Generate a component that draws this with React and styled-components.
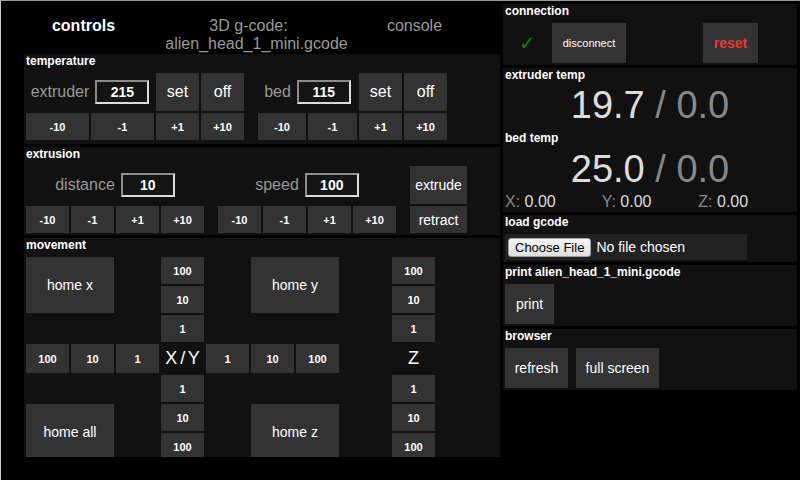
import React from 'react';
import styled, { createGlobalStyle } from 'styled-components';

const GlobalStyle = createGlobalStyle`
  html, body {
    margin: 0;
    padding: 0;
    background: #000;
  }
  body {
    width: 800px;
    height: 480px;
    box-sizing: border-box;
    border-top: 1px solid #9a9a9a;
    border-left: 1px solid #c8c8c8;
    font-family: "Liberation Sans", Arial, sans-serif;
    color: #fff;
    overflow: hidden;
  }
`;

const Page = styled.div`
  display: flex;
  align-items: flex-start;
  gap: 3px;
  padding-left: 23px;
`;

const LeftColumn = styled.div`
  width: 476px;
  display: flex;
  flex-direction: column;
`;

const RightColumn = styled.div`
  width: 294px;
  margin-top: 3px;
  display: flex;
  flex-direction: column;
  gap: 3px;
`;

const Stack = styled.div`
  display: flex;
  flex-direction: column;
  gap: 3px;
`;

const Tabs = styled.nav`
  display: flex;
  height: 53px;
  box-sizing: border-box;
  padding-top: 16px;
  font-size: 16px;
  line-height: 18px;
`;

const Tab = styled.div`
  width: ${p => p.$w}px;
  flex: none;
  text-align: center;
  color: ${p => (p.$active ? '#fff' : '#999')};
  font-weight: ${p => (p.$active ? 'bold' : 'normal')};
`;

const TabLine = styled.span`
  display: block;
  padding-right: ${p => p.$shift || 0}px;
`;

const Panel = styled.section`
  background: #111;
  padding: 0 2px ${p => (p.$pb !== undefined ? p.$pb : 2)}px;
  box-sizing: border-box;
  ${p => (p.$h ? `height: ${p.$h}px; overflow: hidden;` : '')}
`;

const PanelTitle = styled.div`
  font-size: 12px;
  font-weight: bold;
  line-height: 14px;
  margin-bottom: ${p => (p.$mb !== undefined ? p.$mb : 5)}px;
  color: #fff;
`;

const Btn = styled.button`
  grid-column: ${p => p.$col || 'auto'};
  grid-row: ${p => p.$row || 'auto'};
  width: ${p => (p.$w ? `${p.$w}px` : 'auto')};
  height: ${p => (p.$h ? `${p.$h}px` : 'auto')};
  margin: 0;
  padding: 0;
  border: none;
  background: #333;
  color: ${p => p.$color || '#fff'};
  font-family: inherit;
  font-size: ${p => (p.$small ? 11 : p.$size || 14)}px;
  font-weight: ${p => (p.$small || p.$bold ? 'bold' : 'normal')};
  display: flex;
  align-items: center;
  justify-content: center;
  cursor: pointer;
`;

const TempGrid = styled.div`
  display: grid;
  grid-template-columns: 63px 63px 43px 43px 10px 48px 49px 43px 43px;
  grid-template-rows: 38px 27px;
  gap: 2px;
`;

const ExtrusionGrid = styled.div`
  display: grid;
  grid-template-columns: 43px 43px 43px 43px 10px 43px 43px 43px 43px 10px 57px;
  grid-template-rows: 38px 27px;
  gap: 2px;
`;

const MoveGrid = styled.div`
  display: grid;
  grid-template-columns: repeat(7, 43px) 49px 43px;
  grid-template-rows: 27px 27px 27px 29px 27px 27px 27px;
  gap: 2px;
`;

const FieldCell = styled.div`
  grid-column: ${p => p.$col};
  grid-row: 1;
  display: flex;
  align-items: center;
  justify-content: center;
  gap: 6px;
  color: #999;
  font-size: 16px;
`;

const NumInput = styled.input`
  width: 54px;
  height: 24px;
  box-sizing: border-box;
  padding: 0;
  background: #151515;
  color: #fff;
  border: 2px solid;
  border-color: #8c8c8c #dcdcdc #dcdcdc #8c8c8c;
  text-align: center;
  font-family: inherit;
  font-size: 14px;
  font-weight: bold;
`;

const AxisLabel = styled.div`
  grid-column: ${p => p.$col};
  grid-row: ${p => p.$row};
  display: flex;
  align-items: center;
  justify-content: center;
  font-size: 18px;
  word-spacing: -2px;
  color: #fff;
`;

const ConnRow = styled.div`
  display: grid;
  grid-template-columns: 45px 74px 73px 55px;
  grid-template-rows: 40px;
  gap: 2px;
`;

const Check = styled.div`
  display: flex;
  align-items: center;
  justify-content: center;
  color: #0a800a;
  font-size: 20px;
  font-family: "DejaVu Sans", sans-serif;
`;

const BigTemp = styled.div`
  text-align: center;
  font-size: 38px;
  line-height: 43px;
  color: #ddd;
  margin-bottom: ${p => p.$mb || 0}px;
`;

const Target = styled.span`
  color: #888;
`;

const Coords = styled.div`
  display: grid;
  grid-template-columns: repeat(3, 1fr);
  font-size: 16px;
  line-height: 18px;
  margin-top: 2px;
  color: #ddd;
`;

const CoordKey = styled.span`
  color: #888;
`;

const FileBox = styled.div`
  width: 242px;
  height: 26px;
  box-sizing: border-box;
  padding-left: 3px;
  background: #222;
  display: flex;
  align-items: center;
`;

const FileInput = styled.input`
  width: 100%;
  color: #fff;
  font-family: inherit;
  font-size: 14px;
  &::file-selector-button {
    height: 19px;
    margin-right: 5px;
    padding: 0 6px;
    border: 1px solid #a3a3a3;
    border-radius: 3px;
    background: linear-gradient(#f6f6f6, #dedede);
    color: #000;
    font-family: inherit;
    font-size: 13px;
  }
`;

const ActionRow = styled.div`
  display: flex;
  gap: ${p => p.$gap || 0}px;
`;

const steps = ['-10', '-1', '+1', '+10'];

function Temperature() {
  return (
    <Panel $pb={4}>
      <PanelTitle>temperature</PanelTitle>
      <TempGrid>
        <FieldCell $col="1 / 3">
          extruder <NumInput defaultValue="215" />
        </FieldCell>
        <Btn $col={3} $row={1} $size={16}>set</Btn>
        <Btn $col={4} $row={1} $size={16}>off</Btn>
        <FieldCell $col="6 / 8">
          bed <NumInput defaultValue="115" />
        </FieldCell>
        <Btn $col={8} $row={1} $size={16}>set</Btn>
        <Btn $col={9} $row={1} $size={16}>off</Btn>
        {steps.map((s, i) => (
          <Btn key={'e' + s} $col={i + 1} $row={2} $small>{s}</Btn>
        ))}
        {steps.map((s, i) => (
          <Btn key={'b' + s} $col={i + 6} $row={2} $small>{s}</Btn>
        ))}
      </TempGrid>
    </Panel>
  );
}

function Extrusion() {
  return (
    <Panel>
      <PanelTitle>extrusion</PanelTitle>
      <ExtrusionGrid>
        <FieldCell $col="1 / 5">
          distance <NumInput defaultValue="10" />
        </FieldCell>
        <FieldCell $col="6 / 10">
          speed <NumInput defaultValue="100" />
        </FieldCell>
        <Btn $col={11} $row={1}>extrude</Btn>
        {steps.map((s, i) => (
          <Btn key={'d' + s} $col={i + 1} $row={2} $small>{s}</Btn>
        ))}
        {steps.map((s, i) => (
          <Btn key={'s' + s} $col={i + 6} $row={2} $small>{s}</Btn>
        ))}
        <Btn $col={11} $row={2}>retract</Btn>
      </ExtrusionGrid>
    </Panel>
  );
}

function Movement() {
  const column = ['100', '10', '1'];
  return (
    <Panel $h={219} $pb={0}>
      <PanelTitle>movement</PanelTitle>
      <MoveGrid>
        <Btn $col="1 / 3" $row="1 / 3">home x</Btn>
        <Btn $col="6 / 8" $row="1 / 3">home y</Btn>
        {column.map((s, i) => (
          <Btn key={'yu' + s} $col={4} $row={i + 1} $small>{s}</Btn>
        ))}
        {column.map((s, i) => (
          <Btn key={'zu' + s} $col={9} $row={i + 1} $small>{s}</Btn>
        ))}
        {column.map((s, i) => (
          <Btn key={'xl' + s} $col={i + 1} $row={4} $small>{s}</Btn>
        ))}
        <AxisLabel $col={4} $row={4}>X / Y</AxisLabel>
        {[...column].reverse().map((s, i) => (
          <Btn key={'xr' + s} $col={i + 5} $row={4} $small>{s}</Btn>
        ))}
        <AxisLabel $col={9} $row={4}>Z</AxisLabel>
        {[...column].reverse().map((s, i) => (
          <Btn key={'yd' + s} $col={4} $row={i + 5} $small>{s}</Btn>
        ))}
        {[...column].reverse().map((s, i) => (
          <Btn key={'zd' + s} $col={9} $row={i + 5} $small>{s}</Btn>
        ))}
        <Btn $col="1 / 3" $row="6 / 8">home all</Btn>
        <Btn $col="6 / 8" $row="6 / 8">home z</Btn>
      </MoveGrid>
    </Panel>
  );
}

export default function App() {
  return (
    <>
      <GlobalStyle />
      <Page>
        <LeftColumn>
          <Tabs>
            <Tab $w={119} $active>controls</Tab>
            <Tab $w={227}>
              <TabLine $shift={16}>3D g-code:</TabLine>
              <TabLine>alien_head_1_mini.gcode</TabLine>
            </Tab>
            <Tab $w={89}>console</Tab>
          </Tabs>
          <Stack>
            <Temperature />
            <Extrusion />
            <Movement />
          </Stack>
        </LeftColumn>

        <RightColumn>
          <Panel>
            <PanelTitle>connection</PanelTitle>
            <ConnRow>
              <Check>✓</Check>
              <Btn $size={11}>disconnect</Btn>
              <div />
              <Btn $size={14} $bold $color="#ee3535">reset</Btn>
            </ConnRow>
          </Panel>

          <Panel $pb={1}>
            <PanelTitle $mb={2}>extruder temp</PanelTitle>
            <BigTemp $mb={4}>
              19.7 <Target>/ 0.0</Target>
            </BigTemp>
            <PanelTitle $mb={3}>bed temp</PanelTitle>
            <BigTemp>
              25.0 <Target>/ 0.0</Target>
            </BigTemp>
            <Coords>
              <span><CoordKey>X:</CoordKey> 0.00</span>
              <span><CoordKey>Y:</CoordKey> 0.00</span>
              <span><CoordKey>Z:</CoordKey> 0.00</span>
            </Coords>
          </Panel>

          <Panel>
            <PanelTitle>load gcode</PanelTitle>
            <FileBox>
              <FileInput type="file" />
            </FileBox>
          </Panel>

          <Panel>
            <PanelTitle>print alien_head_1_mini.gcode</PanelTitle>
            <ActionRow>
              <Btn $w={49} $h={40}>print</Btn>
            </ActionRow>
          </Panel>

          <Panel>
            <PanelTitle>browser</PanelTitle>
            <ActionRow $gap={8}>
              <Btn $w={63} $h={40}>refresh</Btn>
              <Btn $w={83} $h={40}>full screen</Btn>
            </ActionRow>
          </Panel>
        </RightColumn>
      </Page>
    </>
  );
}
